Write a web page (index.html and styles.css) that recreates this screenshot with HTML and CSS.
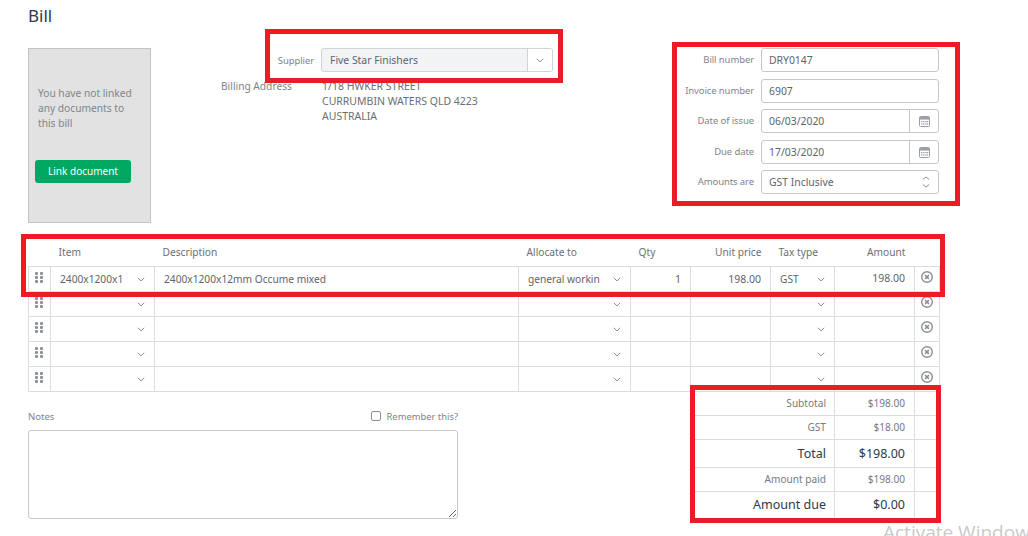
FILE: index.html
```html
<!DOCTYPE html>
<html lang="en">
<head>
<meta charset="utf-8">
<title>Bill</title>
<link rel="stylesheet" href="styles.css">
</head>
<body>
<svg class="defs" width="0" height="0" aria-hidden="true">
  <symbol id="chev" viewBox="0 0 8 5"><path d="M.8.8 4 3.9 7.2.8" fill="none" stroke="#8a8f94" stroke-width="1"/></symbol>
  <symbol id="grip" viewBox="0 0 8 11"><g fill="#8b9096"><rect x="0" y="0" width="3" height="3" rx="1"/><rect x="5" y="0" width="3" height="3" rx="1"/><rect x="0" y="4" width="3" height="3" rx="1"/><rect x="5" y="4" width="3" height="3" rx="1"/><rect x="0" y="8" width="3" height="3" rx="1"/><rect x="5" y="8" width="3" height="3" rx="1"/></g></symbol>
  <symbol id="close" viewBox="0 0 12 12"><circle cx="6" cy="6" r="5.3" fill="none" stroke="#8b9096" stroke-width="1.4"/><path d="M4.1 4.1 7.9 7.9M7.9 4.1 4.1 7.9" stroke="#8b9096" stroke-width="1.5"/></symbol>
  <symbol id="cal" viewBox="0 0 11 11"><rect x=".5" y=".5" width="10" height="10" rx="1" fill="#fff" stroke="#9aa0a6"/><rect x="1" y="1" width="9" height="2.6" fill="#9aa0a6"/><g fill="#9aa0a6"><rect x="2" y="5" width="1.4" height="1.2"/><rect x="4.1" y="5" width="1.4" height="1.2"/><rect x="6.2" y="5" width="1.4" height="1.2"/><rect x="8" y="5" width="1.2" height="1.2"/><rect x="2" y="7.4" width="1.4" height="1.2"/><rect x="4.1" y="7.4" width="1.4" height="1.2"/><rect x="6.2" y="7.4" width="1.4" height="1.2"/><rect x="8" y="7.4" width="1.2" height="1.2"/></g></symbol>
  <symbol id="updown" viewBox="0 0 8 14"><path d="M.8 4.6 4 1.9 7.2 4.6M.8 9.4 4 12.1 7.2 9.4" fill="none" stroke="#8a8f94" stroke-width="1"/></symbol>
</svg>

<main class="page">
  <h1 class="title">Bill</h1>

  <section class="top">
    <aside class="docs">
      <p class="docs-text">You have not linked any documents to this bill</p>
      <button class="link-btn" type="button">Link document</button>
    </aside>

    <div class="supplier">
      <div class="supplier-row">
        <span class="label">Supplier</span>
        <div class="supplier-select">
          <span class="supplier-name">Five Star Finishers</span>
          <span class="supplier-btn"><svg class="i-chev"><use href="#chev"/></svg></span>
        </div>
      </div>
      <div class="address-row">
        <span class="label address-label">Billing Address</span>
        <div class="address">1/18 HWKER STREET<br>CURRUMBIN WATERS QLD 4223<br>AUSTRALIA</div>
      </div>
    </div>

    <div class="meta">
      <div class="meta-row meta-a"><span class="label">Bill number</span><div class="control">DRY0147</div></div>
      <div class="meta-row meta-b"><span class="label">Invoice number</span><div class="control">6907</div></div>
      <div class="meta-row meta-a"><span class="label">Date of issue</span><div class="control">06/03/2020<span class="cal-btn"><svg class="i-cal"><use href="#cal"/></svg></span></div></div>
      <div class="meta-row meta-b"><span class="label">Due date</span><div class="control">17/03/2020<span class="cal-btn"><svg class="i-cal"><use href="#cal"/></svg></span></div></div>
      <div class="meta-row meta-a"><span class="label">Amounts are</span><div class="control control-sel">GST Inclusive<svg class="i-updown"><use href="#updown"/></svg></div></div>
    </div>
  </section>

  <table class="lines">
    <colgroup>
      <col class="c-grip"><col class="c-item"><col class="c-desc"><col class="c-alloc"><col class="c-qty"><col class="c-price"><col class="c-tax"><col class="c-amt"><col class="c-x">
    </colgroup>
    <thead>
      <tr>
        <th></th><th>Item</th><th>Description</th><th>Allocate to</th><th>Qty</th><th class="num">Unit price</th><th>Tax type</th><th class="num">Amount</th><th></th>
      </tr>
    </thead>
    <tbody>
      <tr>
        <td class="grip"><svg class="i-grip"><use href="#grip"/></svg></td>
        <td class="sel">2400x1200x1<svg class="i-chev"><use href="#chev"/></svg></td>
        <td>2400x1200x12mm Occume mixed</td>
        <td class="sel">general workin<svg class="i-chev"><use href="#chev"/></svg></td>
        <td class="num">1</td>
        <td class="num">198.00</td>
        <td class="sel">GST<svg class="i-chev"><use href="#chev"/></svg></td>
        <td class="num amount">198.00</td>
        <td class="x"><svg class="i-close"><use href="#close"/></svg></td>
      </tr>
      <tr>
        <td class="grip"><svg class="i-grip"><use href="#grip"/></svg></td>
        <td class="sel"><svg class="i-chev"><use href="#chev"/></svg></td><td></td>
        <td class="sel"><svg class="i-chev"><use href="#chev"/></svg></td><td></td><td></td>
        <td class="sel"><svg class="i-chev"><use href="#chev"/></svg></td><td></td>
        <td class="x"><svg class="i-close"><use href="#close"/></svg></td>
      </tr>
      <tr>
        <td class="grip"><svg class="i-grip"><use href="#grip"/></svg></td>
        <td class="sel"><svg class="i-chev"><use href="#chev"/></svg></td><td></td>
        <td class="sel"><svg class="i-chev"><use href="#chev"/></svg></td><td></td><td></td>
        <td class="sel"><svg class="i-chev"><use href="#chev"/></svg></td><td></td>
        <td class="x"><svg class="i-close"><use href="#close"/></svg></td>
      </tr>
      <tr>
        <td class="grip"><svg class="i-grip"><use href="#grip"/></svg></td>
        <td class="sel"><svg class="i-chev"><use href="#chev"/></svg></td><td></td>
        <td class="sel"><svg class="i-chev"><use href="#chev"/></svg></td><td></td><td></td>
        <td class="sel"><svg class="i-chev"><use href="#chev"/></svg></td><td></td>
        <td class="x"><svg class="i-close"><use href="#close"/></svg></td>
      </tr>
      <tr>
        <td class="grip"><svg class="i-grip"><use href="#grip"/></svg></td>
        <td class="sel"><svg class="i-chev"><use href="#chev"/></svg></td><td></td>
        <td class="sel"><svg class="i-chev"><use href="#chev"/></svg></td><td></td><td></td>
        <td class="sel"><svg class="i-chev"><use href="#chev"/></svg></td><td></td>
        <td class="x"><svg class="i-close"><use href="#close"/></svg></td>
      </tr>
    </tbody>
  </table>

  <section class="bottom">
    <div class="notes">
      <div class="notes-head">
        <label class="notes-label" for="notes">Notes</label>
        <label class="remember"><input class="check" type="checkbox">Remember this?</label>
      </div>
      <textarea class="notes-box" id="notes"></textarea>
    </div>

    <div class="totals">
      <div class="t-row"><span class="t-label">Subtotal</span><span class="t-val">$198.00</span><span class="t-end"></span></div>
      <div class="t-row"><span class="t-label">GST</span><span class="t-val">$18.00</span><span class="t-end"></span></div>
      <div class="t-row t-big t-total"><span class="t-label">Total</span><span class="t-val">$198.00</span><span class="t-end"></span></div>
      <div class="t-row"><span class="t-label">Amount paid</span><span class="t-val">$198.00</span><span class="t-end"></span></div>
      <div class="t-row t-big t-due"><span class="t-label">Amount due</span><span class="t-val">$0.00</span><span class="t-end"></span></div>
    </div>
  </section>

  <div class="mark mark-supplier"></div>
  <div class="mark mark-meta"></div>
  <div class="mark mark-line"></div>
  <div class="mark mark-totals"></div>
  <div class="watermark">Activate Windows</div>
</main>
</body>
</html>
```
FILE: styles.css
```css
* { box-sizing: border-box; }
html, body { margin: 0; padding: 0; background: #fff; }
body { font-family: "Noto Sans", "Open Sans", sans-serif; font-size: 11px; color: #5f6368; }
.defs { position: absolute; }

.page { position: relative; width: 1028px; height: 536px; overflow: hidden; padding: 0 0 0 28px; }

.title { margin: 0; padding-top: 4px; height: 48px; font-size: 17px; line-height: 24px; font-weight: 400; color: #2c3a4a; }

.top { display: flex; width: 911px; height: 191px; }
.label { color: #7f8488; font-size: 9.5px; letter-spacing: -.1px; line-height: 15px; }

.docs { width: 123px; height: 175px; flex: none; background: #e2e2e2; border: 1px solid #c4c4c4; padding: 37px 6px 0; }
.docs-text { margin: 0 0 0 3px; width: 100px; font-size: 10.2px; line-height: 15px; color: #80858a; }
.link-btn { display: block; margin-top: 29px; width: 96px; height: 23px; padding: 0 0 1px; border: 0; border-radius: 3px; background: #00a862; color: #fff; font: inherit; font-size: 10px; }

.supplier { width: 332px; margin-left: 70px; flex: none; }
.supplier-row { display: flex; justify-content: flex-end; align-items: center; gap: 7px; }
.supplier-select { display: flex; width: 232px; height: 24px; border: 1px solid #d0d3d8; border-radius: 3px; background: #f2f3f5; align-items: center; }
.supplier-name { flex: 1; padding: 0 0 1px 8px; font-size: 10.4px; color: #5f6368; }
.supplier-btn { display: flex; align-items: center; justify-content: center; width: 25px; height: 22px; background: #fff; border-left: 1px solid #d0d3d8; border-radius: 0 2px 2px 0; }
.address-row { display: flex; margin-top: 7px; }
.address-label { width: 101px; font-size: 10.2px; letter-spacing: 0; }
.address { font-size: 10.5px; line-height: 15px; color: #6a6f74; }

.i-chev { width: 8px; height: 5px; display: block; flex: none; }

.meta { margin-left: auto; width: 260px; display: flex; flex-direction: column; flex: none; }
.meta-row { display: flex; justify-content: flex-end; align-items: center; gap: 7px; height: 24px; }
.meta-row .label { padding-bottom: 1px; }
.meta-a { margin-bottom: 7px; }
.meta-b { margin-bottom: 6px; }
.control { position: relative; display: flex; align-items: center; width: 178px; height: 24px; border: 1px solid #c5c7cc; border-radius: 3px; padding: 0 0 1px 7px; font-size: 10.4px; color: #5f6368; background: #fff; }
.cal-btn { margin: -1px 0 -2px auto; display: flex; align-items: center; justify-content: center; width: 29px; height: 22px; border-left: 1px solid #c5c7cc; }
.i-cal { width: 11px; height: 11px; display: block; }
.control-sel { justify-content: space-between; padding-right: 8px; }
.i-updown { width: 8px; height: 14px; display: block; }

.lines { table-layout: fixed; border-collapse: collapse; width: 912px; }
.c-grip { width: 22px; } .c-item { width: 104px; } .c-desc { width: 364px; } .c-alloc { width: 112px; }
.c-qty { width: 60px; } .c-price { width: 80px; } .c-tax { width: 64px; } .c-amt { width: 80px; } .c-x { width: 25px; }
.lines th { height: 27px; padding: 0 8px; text-align: left; font-weight: 400; font-size: 10.2px; color: #6a6f74; border-bottom: 1px solid #dcdcdc; }
.lines th.num { text-align: right; padding-right: 9px; }
.lines td { height: 25px; padding: 0 9px; border: 1px solid #dcdcdc; font-size: 10.2px; color: #5f6368; white-space: nowrap; position: relative; }
.lines td.num { text-align: right; font-size: 10.5px; }
.lines td.sel .i-chev { position: absolute; right: 9px; top: 10px; }
.lines td.sel { padding-right: 20px; }
.lines td.grip { padding: 0 0 2px 6px; }
.i-grip { width: 8px; height: 11px; display: block; }
.lines td.x { padding: 0 0 4px 6px; }
.i-close { width: 12px; height: 12px; display: block; }
.lines td.amount { padding-bottom: 2px; }

.bottom { display: flex; justify-content: space-between; width: 912px; }
.notes { width: 430px; padding-top: 17px; }
.notes-head { display: flex; justify-content: space-between; align-items: center; height: 15px; }
.notes-label { font-size: 9.5px; color: #7f8488; }
.remember { display: flex; align-items: center; gap: 6px; font-size: 9.4px; color: #7f8488; }
.check { appearance: none; margin: 0; width: 10px; height: 10px; border: 1px solid #8b9096; border-radius: 2px; background: #fff; }
.notes-box { display: block; margin-top: 6px; width: 430px; height: 89px; border: 1px solid #c5c7cc; border-radius: 3px; background: #fff; }

.totals { width: 245px; flex: none; }
.t-row { display: grid; grid-template-columns: 140px 80px 24px; height: 24px; border-bottom: 1px solid #dcdcdc; align-items: stretch; border-right: 1px solid #dcdcdc; }
.t-big { height: 28px; }
.t-due { height: 27px; }
.t-label, .t-val { display: flex; align-items: center; justify-content: flex-end; font-size: 10.1px; color: #767b80; }
.t-label { padding-right: 8px; border-right: 1px solid #dcdcdc; }
.t-val { padding-right: 9px; border-right: 1px solid #dcdcdc; }
.t-big .t-label, .t-big .t-val { font-size: 12.5px; color: #2c3a4a; }

.mark { position: absolute; border: 5px solid #ed1c24; pointer-events: none; }
.mark-supplier { left: 265px; top: 29px; width: 298px; height: 54px; }
.mark-meta { left: 672px; top: 42px; width: 288px; height: 164px; }
.mark-line { left: 21px; top: 234px; width: 924px; height: 63px; }
.mark-totals { left: 690px; top: 385px; width: 251px; height: 138px; }

.watermark { position: absolute; left: 883px; top: 519px; font-family: "Open Sans", sans-serif; font-size: 19px; line-height: 26px; color: #c9c9c9; white-space: nowrap; }
```
